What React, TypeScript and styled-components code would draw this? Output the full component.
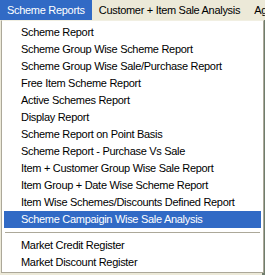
import React from "react";
import styled, { createGlobalStyle } from "styled-components";

const GlobalStyle = createGlobalStyle`
  html, body {
    margin: 0;
    padding: 0;
    background: #8c98a3;
    font-family: "Liberation Sans", Arial, sans-serif;
    font-size: 11px;
    letter-spacing: -0.3px;
  }
`;

const topMenus = ["Scheme Reports", "Customer + Item Sale Analysis", "Ag"];

const groups = [
  [
    "Scheme Report",
    "Scheme Group Wise Scheme Report",
    "Scheme Group Wise Sale/Purchase Report",
    "Free Item Scheme Report",
    "Active Schemes Report",
    "Display Report",
    "Scheme Report on Point Basis",
    "Scheme Report - Purchase Vs Sale",
    "Item + Customer Group Wise Sale Report",
    "Item Group + Date Wise Scheme Report",
    "Item Wise Schemes/Discounts Defined Report",
    "Scheme Campaigin Wise Sale Analysis",
  ],
  ["Market Credit Register", "Market Discount Register"],
];

const selected = "Scheme Campaigin Wise Sale Analysis";

const App = () => {
  return (
    <Page>
      <GlobalStyle />
      <MenuBar>
        {topMenus.map((m, i) => (
          <TopItem key={m} active={i === 0}>
            {m}
          </TopItem>
        ))}
      </MenuBar>
      <Workspace>
        <Dropdown>
          {groups.map((group, gi) => (
            <React.Fragment key={gi}>
              {gi > 0 && <Separator />}
              {group.map((item) => (
                <MenuItem key={item} active={item === selected}>
                  {item}
                </MenuItem>
              ))}
            </React.Fragment>
          ))}
        </Dropdown>
      </Workspace>
    </Page>
  );
};

export default App;

const Page = styled.div`
  width: 265px;
  height: 275px;
  overflow: hidden;
  display: flex;
  flex-direction: column;
`;

const MenuBar = styled.div`
  height: 20px;
  display: flex;
  align-items: stretch;
  background: #ece9d8;
  white-space: nowrap;
`;

const TopItem = styled.div<{ active?: boolean }>`
  display: flex;
  align-items: center;
  padding: 0 7px;
  color: ${(p) => (p.active ? "#ffffff" : "#000000")};
  background: ${(p) => (p.active ? "#316ac5" : "transparent")};
`;

const Workspace = styled.div`
  position: relative;
  flex: 1;
  background: linear-gradient(to right, #ece9d8 262px, #6f7d6c 262px);
`;

const Dropdown = styled.div`
  position: absolute;
  left: 1px;
  top: 0;
  width: 257px;
  background: #ffffff;
  border: 1px solid #aca899;
  border-top-color: #f1efe2;
  padding: 3px 2px 1px 2px;
  display: flex;
  flex-direction: column;
`;

const MenuItem = styled.div<{ active?: boolean }>`
  height: 17px;
  line-height: 17px;
  padding-left: 17px;
  white-space: nowrap;
  color: ${(p) => (p.active ? "#ffffff" : "#000000")};
  background: ${(p) => (p.active ? "#316ac5" : "transparent")};
`;

const Separator = styled.div`
  height: 9px;
  display: flex;
  flex-direction: column;
  justify-content: center;

  &::before {
    content: "";
    height: 1px;
    margin: 0 1px;
    background: #aca899;
  }
  &::after {
    content: "";
    height: 1px;
    margin: 0 1px;
    background: #ffffff;
  }
`;
